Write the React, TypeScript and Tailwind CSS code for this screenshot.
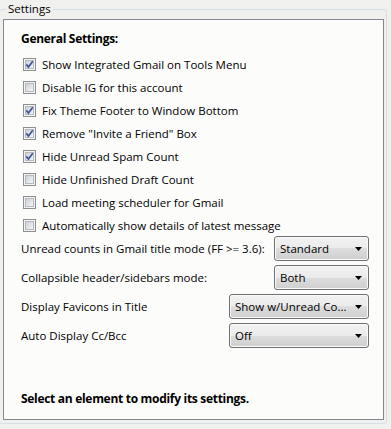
import { ReactNode } from 'react'

const checks: { label: string; checked: boolean }[] = [
  { label: 'Show Integrated Gmail on Tools Menu', checked: true },
  { label: 'Disable IG for this account', checked: false },
  { label: 'Fix Theme Footer to Window Bottom', checked: true },
  { label: 'Remove "Invite a Friend" Box', checked: true },
  { label: 'Hide Unread Spam Count', checked: true },
  { label: 'Hide Unfinished Draft Count', checked: false },
  { label: 'Load meeting scheduler for Gmail', checked: false },
  { label: 'Automatically show details of latest message', checked: false },
]

const selects: { label: string; value: string; wide: boolean }[] = [
  { label: 'Unread counts in Gmail title mode (FF >= 3.6):', value: 'Standard', wide: false },
  { label: 'Collapsible header/sidebars mode:', value: 'Both', wide: false },
  { label: 'Display Favicons in Title', value: 'Show w/Unread Co...', wide: true },
  { label: 'Auto Display Cc/Bcc', value: 'Off', wide: true },
]

function CheckBox({ checked }: { checked: boolean }) {
  return (
    <svg width="13" height="13" viewBox="0 0 13 13" className="shrink-0">
      <defs>
        <linearGradient id="cbg" x1="0" y1="0" x2="1" y2="1">
          <stop offset="0" stopColor="#cbcfd5" />
          <stop offset="1" stopColor="#f7f7f7" />
        </linearGradient>
      </defs>
      <rect x="0.5" y="0.5" width="12" height="12" fill="#f4f4f4" stroke="#8e8f8f" />
      <rect x="2.5" y="2.5" width="8" height="8" fill="url(#cbg)" stroke="#b4b9bf" />
      {checked && (
        <path d="M3.3 6.4 L5.4 9 L9.8 3.2" fill="none" stroke="#3f56a0" strokeWidth="1.7" />
      )}
    </svg>
  )
}

function Select({ children, wide }: { children: ReactNode; wide: boolean }) {
  return (
    <div
      className={`${wide ? 'w-[140px]' : 'w-[95px]'} h-[25px] shrink-0 flex items-center justify-between pl-[5px] pr-[6px] border border-[#707070] rounded-[3px] bg-[linear-gradient(#f2f2f2,#ebebeb_50%,#dddddd_50%,#cfcfcf)] shadow-[inset_0_0_0_1px_#fafafa]`}
    >
      <span className="whitespace-nowrap">{children}</span>
      <svg width="7" height="4" viewBox="0 0 7 4">
        <path d="M0 0 H7 L3.5 4 Z" fill="#000" />
      </svg>
    </div>
  )
}

export default function App() {
  return (
    <div className="w-[391px] h-[429px] bg-[#f0f0ee] overflow-hidden text-[11.5px] text-black font-['Open_Sans',sans-serif]">
      <div className="relative ml-[-1px] mt-[9px] w-[388px] h-[415px] border border-[#d5dfe5] rounded-[3px]">
        <div className="absolute left-[6px] top-[-9px] px-[2px] bg-[#f0f0ee] leading-[16px]">Settings</div>
        <div className="ml-[3px] mt-[9px] w-[381px] h-[401px] border border-[#828790] bg-[#fcfcfb] flex flex-col pl-[17px] pr-[14px] pt-[11px]">
          <div className="font-bold text-[12px] tracking-[-0.3px] leading-[16px]">General Settings:</div>
          <div className="mt-[6px] flex flex-col pl-[2px]">
            {checks.map((c) => (
              <div key={c.label} className="h-[23px] flex items-center gap-[6px]">
                <CheckBox checked={c.checked} />
                <span className="whitespace-nowrap">{c.label}</span>
              </div>
            ))}
          </div>
          <div className="mt-[-1px] flex flex-col gap-[4px]">
            {selects.map((s) => (
              <div key={s.label} className="flex items-center justify-between">
                <span className="whitespace-nowrap">{s.label}</span>
                <Select wide={s.wide}>{s.value}</Select>
              </div>
            ))}
          </div>
          <div className="mt-auto pb-[12px] font-bold text-[12px] tracking-[-0.3px] leading-[16px]">
            Select an element to modify its settings.
          </div>
        </div>
      </div>
    </div>
  )
}
